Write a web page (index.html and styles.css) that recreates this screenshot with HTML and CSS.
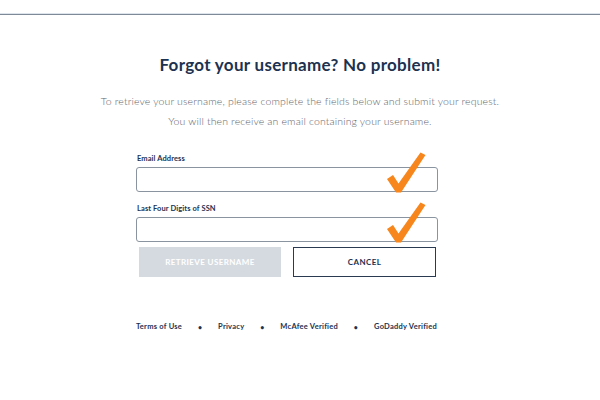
FILE: index.html
```html
<!DOCTYPE html>
<html>
<head>
<meta charset="utf-8">
<link rel="stylesheet" href="styles.css">
</head>
<body>
<div class="topbar"></div>
<main class="page">
  <h1 class="title">Forgot your username? No problem!</h1>
  <p class="intro">To retrieve your username, please complete the fields below and submit your request.<br>You will then receive an email containing your username.</p>
  <form class="form">
    <div class="field">
      <label class="label">Email Address</label>
      <div class="input"></div>
      <svg class="check" viewBox="0 0 40 42" width="40" height="42"><path d="M1 27 L7 23 L12.5 31.5 L34.5 0.5 L39.5 3 L15 40.5 L10 40.5 Z" fill="#f7861c"/></svg>
    </div>
    <div class="field">
      <label class="label">Last Four Digits of SSN</label>
      <div class="input"></div>
      <svg class="check" viewBox="0 0 40 42" width="40" height="42"><path d="M1 27 L7 23 L12.5 31.5 L34.5 0.5 L39.5 3 L15 40.5 L10 40.5 Z" fill="#f7861c"/></svg>
    </div>
    <div class="buttons">
      <div class="btn btn-primary">RETRIEVE USERNAME</div>
      <div class="btn btn-cancel">CANCEL</div>
    </div>
  </form>
  <nav class="footer">
    <span>Terms of Use</span><span class="dot">•</span>
    <span>Privacy</span><span class="dot">•</span>
    <span>McAfee Verified</span><span class="dot">•</span>
    <span>GoDaddy Verified</span>
  </nav>
</main>
</body>
</html>
```

FILE: styles.css
```css
html, body {
  margin: 0;
  padding: 0;
  background: #ffffff;
}
body {
  font-family: "Lato", "Open Sans", sans-serif;
  color: #1d3250;
}
.topbar {
  height: 13px;
  border-bottom: 1px solid #dde4ec;
  box-shadow: 0 1px 0 #7f8a99;
}
.page {
  display: flex;
  flex-direction: column;
}
.title {
  margin: 41px 0 0;
  font-size: 17px;
  line-height: 20px;
  font-weight: 700;
  text-align: center;
  letter-spacing: 0.3px;
  color: #1d3250;
}
.intro {
  margin: 16px 0 0;
  font-size: 10.5px;
  line-height: 20px;
  font-weight: 300;
  letter-spacing: 0.15px;
  text-align: center;
  color: #5f656c;
}
.form {
  width: 302px;
  margin: 23px 0 0 136px;
  display: flex;
  flex-direction: column;
}
.field {
  position: relative;
  display: flex;
  flex-direction: column;
  margin-bottom: 12px;
}
.field + .field {
  margin-bottom: 5px;
}
.label {
  font-size: 7.5px;
  line-height: 10px;
  font-weight: 700;
  letter-spacing: 0.1px;
  margin: 0 0 3px 1px;
  color: #1d3250;
}
.input {
  height: 23px;
  border: 1px solid #8a94a0;
  border-radius: 3px;
  background: #fff;
}
.check {
  position: absolute;
  left: 250px;
  top: -2px;
}
.buttons {
  display: flex;
  gap: 12px;
  padding-left: 3px;
}
.btn {
  height: 30px;
  box-sizing: border-box;
  display: flex;
  align-items: center;
  justify-content: center;
  font-size: 8px;
  font-weight: 700;
  letter-spacing: 0.4px;
}
.btn-primary {
  width: 142px;
  background: #d5dae1;
  color: #ffffff;
}
.btn-cancel {
  width: 143px;
  border: 1px solid #2a3a50;
  color: #1d3250;
}
.footer {
  width: 301px;
  margin: 45px 0 0 136px;
  display: flex;
  justify-content: space-between;
  font-size: 7.5px;
  line-height: 10px;
  font-weight: 700;
  letter-spacing: 0.25px;
  color: #1d3250;
}
.dot {
  font-size: 7px;
}
```
